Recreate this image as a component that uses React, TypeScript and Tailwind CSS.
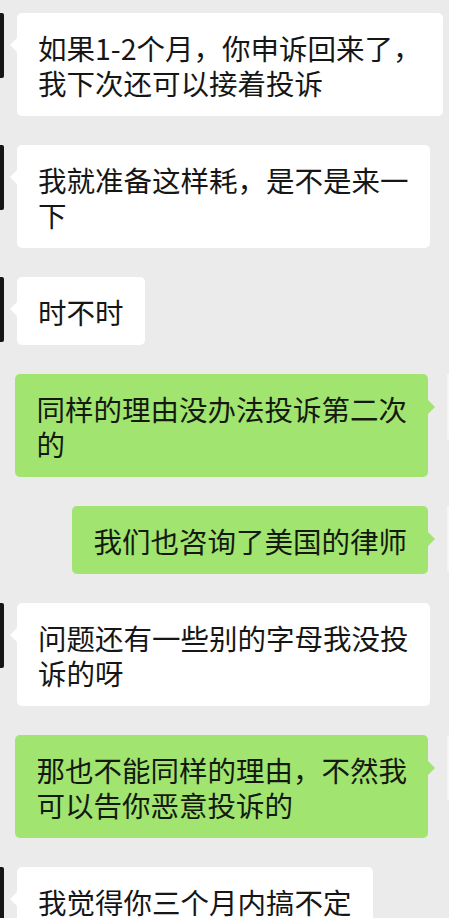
import React from "react";

type Msg = { side: "in" | "out"; lines: string[] };

const messages: Msg[] = [
  { side: "in", lines: ["如果1-2个月，你申诉回来了，", "我下次还可以接着投诉"] },
  { side: "in", lines: ["我就准备这样耗，是不是来一", "下"] },
  { side: "in", lines: ["时不时"] },
  { side: "out", lines: ["同样的理由没办法投诉第二次", "的"] },
  { side: "out", lines: ["我们也咨询了美国的律师"] },
  { side: "in", lines: ["问题还有一些别的字母我没投", "诉的呀"] },
  { side: "out", lines: ["那也不能同样的理由，不然我", "可以告你恶意投诉的"] },
  { side: "in", lines: ["我觉得你三个月内搞不定"] },
];

function Lines({ lines }: { lines: string[] }) {
  return (
    <>
      {lines.map((l, i) => (
        <div key={i} className="whitespace-nowrap">
          {l}
        </div>
      ))}
    </>
  );
}

function Incoming({ lines }: { lines: string[] }) {
  return (
    <div className="flex items-start">
      <div className="w-[4px] h-[65px] bg-[#151515] rounded-r-[2px] shrink-0" />
      <div className="relative ml-[13px] bg-white rounded-[5px] px-[21px] pt-[17px] pb-[16px] text-[28.5px] leading-[35px] text-[#161616]">
        <div className="absolute left-[-7px] top-[24px] w-0 h-0 border-y-[8px] border-y-transparent border-r-[8px] border-r-white" />
        <Lines lines={lines} />
      </div>
    </div>
  );
}

function Outgoing({ lines }: { lines: string[] }) {
  return (
    <div className="flex items-start justify-end">
      <div className="relative mr-[19px] bg-[#a1e46f] rounded-[5px] px-[21px] pt-[17px] pb-[16px] text-[28.5px] leading-[35px] text-[#141a10]">
        <div className="absolute right-[-7px] top-[25px] w-0 h-0 border-y-[8px] border-y-transparent border-l-[8px] border-l-[#a1e46f]" />
        <Lines lines={lines} />
      </div>
      <div className="w-[2px] h-[65px] bg-[#f6f4f4] shrink-0" />
    </div>
  );
}

export default function App() {
  return (
    <div
      className="w-[449px] h-[918px] overflow-hidden bg-[#ebebeb] pt-[13px] flex flex-col gap-[29px]"
      style={{ fontFamily: '"Noto Sans CJK SC", "Noto Sans", sans-serif' }}
    >
      {messages.map((m, i) =>
        m.side === "in" ? <Incoming key={i} lines={m.lines} /> : <Outgoing key={i} lines={m.lines} />
      )}
    </div>
  );
}
